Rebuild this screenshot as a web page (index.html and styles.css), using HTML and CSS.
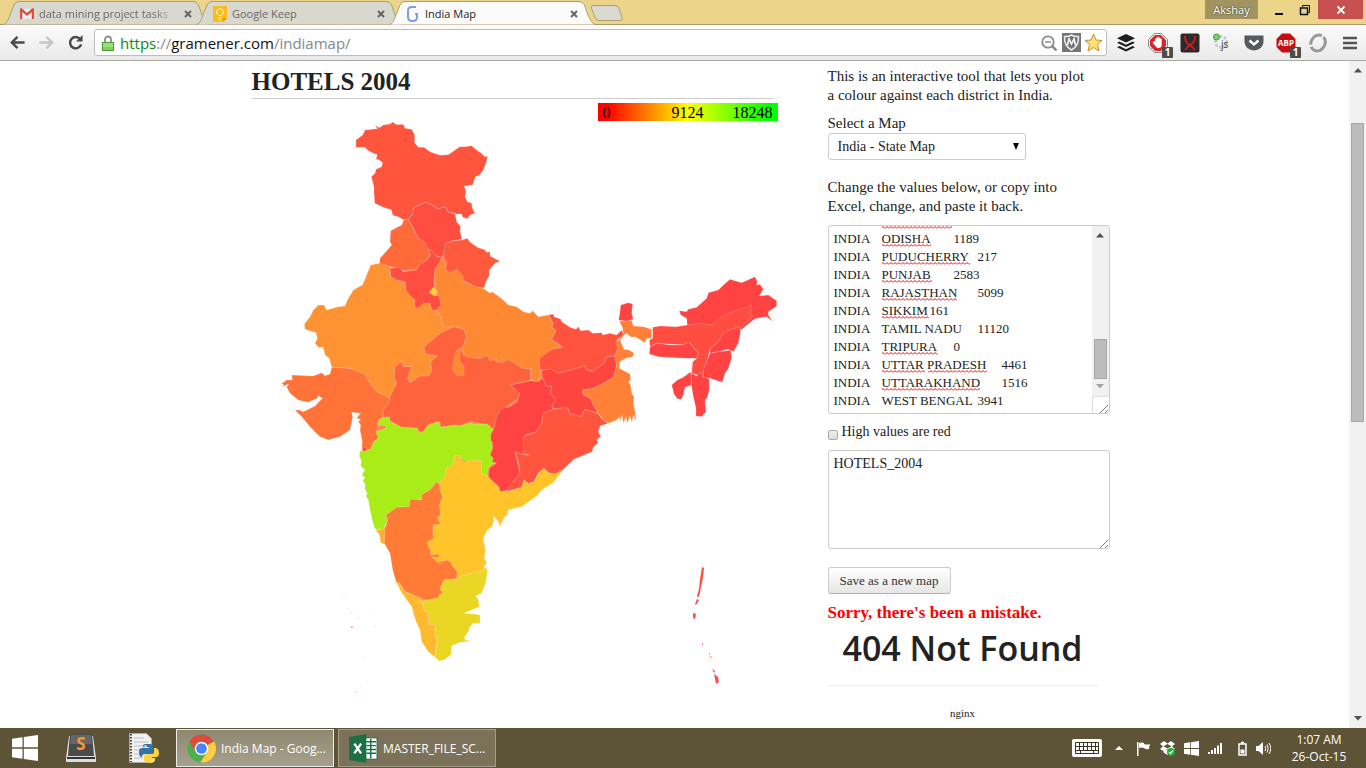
FILE: index.html
```html
<!DOCTYPE html>
<html lang="en">
<head>
<meta charset="utf-8">
<title>India Map</title>
<link rel="stylesheet" href="styles.css">
</head>
<body>
<header class="tabstrip">
  <div class="tabs">
    <div class="tab">
      <svg class="tab-shape" viewBox="0 0 207 25" preserveAspectRatio="none"><path d="M0 24.5C4 24 5 20 7 15L11 5Q12.500 1.500 16 1.500H190Q194 1.500 195.500 5L199 15C201 20 203 24 207 24.500"/></svg>
      <svg class="fav" viewBox="0 0 16 16"><path fill="#eee" d="M2 3h12v10H2z"/><path fill="#d9503f" d="M1 3.500Q1 2 2.500 2L8 7l5.500-5Q15 2 15 3.500V13h-2.200V6L8 10 3.200 6v7H1z"/></svg>
      <span class="tab-title fade">data mining project tasks</span>
      <button class="close" aria-label="Close tab"><svg viewBox="0 0 8 8"><path d="M1 1l6 6M7 1L1 7"/></svg></button>
    </div>
    <div class="tab">
      <svg class="tab-shape" viewBox="0 0 207 25" preserveAspectRatio="none"><path d="M0 24.5C4 24 5 20 7 15L11 5Q12.500 1.500 16 1.500H190Q194 1.500 195.500 5L199 15C201 20 203 24 207 24.500"/></svg>
      <svg class="fav" viewBox="0 0 16 16"><path fill="#fbbc1c" d="M1 0h14v12l-4 4H1z"/><path fill="#e29a00" d="M15 12l-4 4v-4z"/><path fill="none" stroke="#fff" d="M6.500 9.500C3 6 5 2.800 8 2.800s5 3.200 1.500 6.700zM6.500 11.500h3M7 13h2"/></svg>
      <span class="tab-title">Google Keep</span>
      <button class="close" aria-label="Close tab"><svg viewBox="0 0 8 8"><path d="M1 1l6 6M7 1L1 7"/></svg></button>
    </div>
    <div class="tab active">
      <svg class="tab-shape" viewBox="0 0 207 25" preserveAspectRatio="none"><path d="M0 24.5C4 24 5 20 7 15L11 5Q12.500 1.500 16 1.500H190Q194 1.500 195.500 5L199 15C201 20 203 24 207 24.500"/></svg>
      <svg class="fav" viewBox="0 0 16 16"><path fill="none" stroke="#7d9fe0" stroke-width="2" d="M11 1H7Q3 1 3 5v6q0 4 4 4h1q4 0 4-4V8H10"/></svg>
      <span class="tab-title">India Map</span>
      <button class="close" aria-label="Close tab"><svg viewBox="0 0 8 8"><path d="M1 1l6 6M7 1L1 7"/></svg></button>
    </div>
    <button class="newtab" aria-label="New tab"><svg viewBox="0 0 34 16"><path fill="#d9d9d0" stroke="#a99f77" d="M3 .5h22q3 0 4 3l3 9q1 3-2 3H9q-3 0-4-3L1.500 3.500Q.5.5 3 .5z"/></svg></button>
  </div>
  <div class="window-controls">
    <button class="user">Akshay</button>
    <button class="wc" aria-label="Minimise"><svg viewBox="0 0 12 12"><path fill="#111" d="M2 9h8v2H2z"/></svg></button>
    <button class="wc" aria-label="Restore"><svg viewBox="0 0 12 12"><path fill="none" stroke="#111" stroke-width="1" d="M3.500 3V1.500h7v7H9"/><path fill="none" stroke="#111" stroke-width="1.500" d="M1.500 4h7v6.500h-7z"/></svg></button>
    <button class="wc quit" aria-label="Close"><svg viewBox="0 0 12 12"><path stroke="#fff" stroke-width="1.800" d="M2.500 2.500l7 7M9.500 2.500l-7 7"/></svg></button>
  </div>
</header>

<nav class="toolbar">
  <button class="nav" aria-label="Back"><svg viewBox="0 0 18 18"><path fill="none" stroke="#4a4a4a" stroke-width="2.600" d="M16.500 9H3.500M9 3L3 9l6 6"/></svg></button>
  <button class="nav" aria-label="Forward"><svg viewBox="0 0 18 18"><path fill="none" stroke="#c6c6c6" stroke-width="2.600" d="M1.500 9h13M9 3l6 6-6 6"/></svg></button>
  <button class="nav" aria-label="Reload"><svg viewBox="0 0 18 18"><path fill="none" stroke="#4a4a4a" stroke-width="2.600" d="M14 5.500A6 6 0 1 0 15 11"/><path fill="#4a4a4a" d="M16.500 1v7H9.500z"/></svg></button>
  <div class="omnibox">
    <svg class="lock" viewBox="0 0 12 16"><path fill="none" stroke="#8a8f8a" stroke-width="1.800" d="M3 8V4.500a3 3 0 0 1 6 0V8"/><rect x=".5" y="7.500" width="11" height="8" fill="#7fd35c" stroke="#4a9a35"/><path stroke="#b4ec98" d="M1 9h10M1 11h10"/></svg>
    <div class="url"><span class="scheme">https</span>://<span class="host">gramener.com</span>/indiamap/</div>
    <svg class="i16" viewBox="0 0 16 16"><circle cx="7" cy="7" r="5.700" fill="none" stroke="#8b8b8b" stroke-width="1.800"/><path stroke="#8b8b8b" stroke-width="1.500" d="M4 7h6"/><path stroke="#8b8b8b" stroke-width="2.500" d="M11 11l4.500 4.500"/></svg>
    <svg class="i19" viewBox="0 0 19 19"><rect width="19" height="19" fill="#757575"/><path fill="#757575" stroke="#eee" stroke-width="1.500" d="M2.500 3.500Q6 4 9.500 2q3.500 2 7 1.500Q17 13 9.500 17 2 13 2.500 3.500z"/><path fill="none" stroke="#fff" stroke-width="1.500" d="M5.500 12l1.500-6 2.500 5L12 6l1.500 6"/></svg>
    <svg class="i19" viewBox="0 0 19 19"><path fill="#ffe173" stroke="#c2902a" d="M9.500 1l2.500 6 6 .5-4.500 4L15 18l-5.500-3.500L4 18l1.500-6.500L1 7.500 7 7z"/></svg>
  </div>
  <svg class="ext" viewBox="0 0 20 20"><g fill="#1d1d1d"><path d="M10 1l9 4.300-9 4.200L1 5.300z"/><path d="M1 9.800l2.500-1.200L10 11.700l6.500-3.100L19 9.800 10 14z"/><path d="M1 14.200L3.500 13l6.500 3.200 6.500-3.200 2.500 1.200-9 4.300z"/></g></svg>
  <div class="badge-wrap"><svg class="ext" viewBox="0 0 20 20"><path fill="#fff" stroke="#888" d="M6.500 .5h7L19.500 6.500v7L13.500 19.500h-7L.5 13.500v-7z"/><path fill="#d8262b" d="M7 2h6l5 5v6l-5 5H7l-5-5V7z"/><path fill="#fff" d="M6 8h1.200V5.500h1.300V4.500h1.300v-.7h1.300v1h1.300v1h1.300V12q0 3-3.300 3-2 0-3-2L4.600 10z"/></svg><span class="badge">1</span></div>
  <svg class="ext" viewBox="0 0 20 20"><rect x=".5" y=".5" width="19" height="19" rx="2" fill="#2d2a2a"/><path fill="none" stroke="#d41c24" stroke-width="1.800" d="M5 3q0 6 4 8.500t6 5.500M15 3q0 6-4 8.500T5 17"/></svg>
  <svg class="ext" viewBox="0 0 20 20"><circle cx="9" cy="9" r="5.500" fill="none" stroke="#c9c9c9" stroke-width="3" stroke-dasharray="2.500 1.500"/><circle cx="4.500" cy="4" r="3" fill="#7bcf77" stroke="#3a9b3a"/><text x="9" y="15" class="js">js</text></svg>
  <svg class="ext" viewBox="0 0 20 20"><path fill="#58595b" d="M.5 2.500h19V9a9.500 8.500 0 0 1-19 0z"/><path fill="none" stroke="#fff" stroke-width="2.400" d="M5.500 7.500l4.500 4 4.500-4"/></svg>
  <div class="badge-wrap"><svg class="ext" viewBox="0 0 20 20"><path fill="#c60d11" d="M6 .5h8L19.500 6v8L14 19.500H6L.5 14V6z"/><text x="10" y="13" text-anchor="middle" class="abp">ABP</text></svg><span class="badge">1</span></div>
  <svg class="ext" viewBox="0 0 20 20"><ellipse cx="10" cy="10" rx="7" ry="8.200" fill="none" stroke="#999" stroke-width="3" stroke-dasharray="17 2" transform="rotate(25 10 10)"/></svg>
  <button class="menu" aria-label="Menu"><svg viewBox="0 0 14 14"><path stroke="#555" stroke-width="2.600" d="M0 2h14M0 7h14M0 12h14"/></svg></button>
</nav>

<div class="viewport">
  <main class="page">
    <section class="chart">
      <h1 class="title">HOTELS 2004</h1>
      <div class="legend"><span>0</span><span>9124</span><span class="max">18248</span></div>
      <svg class="map" viewBox="756 363 1590 1800" role="img" aria-label="Hotels by state">
        <path fill="#ff8650" d="M1240 700L1330 680 1370 740 1360 790 1420 850 1500 930 1640 1000 1700 1000 1850 1020 1845 1130 1800 1240 1640 1390 1590 1420 1500 1480 1440 1560 1420 1700 1350 1780 1290 1950 1240 1780 1170 1600 1110 1380 1130 1300 1060 1120 1120 900 1200 860z"/>
        <g transform="translate(720 180)">
          <path fill="#ff553e" d="M348 240L348 262 375 262 385 272 400 280 412 284 408 297 418 300 428 308 425 320 408 328 405 340 394 350 402 380 402 400 404 430 430 442 455 450 458 466 475 470 492 480 505 478 518 462 522 442 540 435 555 427 575 434 595 447 615 440 625 456 650 462 665 462 668 472 682 476 690 465 705 460 697 445 695 430 682 425 675 410 678 395 673 378 698 375 706 350 718 346 730 330 738 310 743 288 735 290 722 278 710 270 695 257 675 260 660 260 645 270 625 284 600 286 570 275 552 262 535 262 524 248 524 225 515 208 495 205 490 193 470 194 458 186 450 192 430 195 418 203 405 196 412 206 375 210 368 225z"/>
          <path fill="#ff4d42" d="M505 478L518 462 522 442 540 435 555 427 575 434 595 447 615 440 625 456 645 462 650 485 662 500 660 515 666 538 640 542 618 550 612 580 606 592 590 588 575 575 560 565 550 545 535 535 520 505z"/>
          <path fill="#ff6a39" d="M492 478L505 478 520 505 535 535 553 545 565 570 572 582 560 600 540 612 530 628 490 632 470 625 450 620 418 615 420 595 455 555 450 545 452 512 485 495z"/>
        </g>
        <g transform="translate(780 750)">
          <path fill="#ff9333" d="M332 45L358 40 392 50 392 80 430 95 440 120 455 138 465 155 468 172 490 158 510 158 515 180 530 178 535 195 548 205 548 225 580 230 540 250 492 290 495 312 532 318 530 328 512 335 515 360 508 378 480 378 450 398 443 385 455 350 430 350 425 335 405 350 402 380 410 400 408 415 395 430 388 443 350 425 330 400 315 372 270 355 215 352 208 325 195 315 190 292 175 292 165 280 172 265 168 248 135 238 133 222 150 200 160 180 175 165 192 165 200 180 235 170 255 168 262 150 280 120 308 104 320 75z"/>
          <path fill="#ff633d" d="M580 230L612 238 620 260 605 300 610 315 660 325 680 315 710 335 745 328 790 355 812 355 812 390 750 405 780 425 775 445 740 470 715 495 700 540 685 525 630 515 600 528 540 530 530 515 505 525 495 540 485 548 470 535 420 532 390 510 370 500 368 480 385 460 388 443 395 430 410 400 402 380 405 350 425 335 430 350 455 350 443 385 450 398 480 378 508 378 515 360 512 335 532 318 495 312 492 290 540 250z"/>
          <path fill="#ff8833" d="M545 25L556 40 560 62 590 60 612 80 610 95 640 108 670 115 690 130 697 125 730 150 745 165 770 170 790 185 810 190 818 182 835 200 865 195 880 220 875 230 888 242 875 265 905 292 875 298 840 325 842 360 835 395 812 390 812 355 790 355 745 328 725 338 710 335 710 325 690 332 680 315 660 325 625 322 610 315 612 303 600 300 598 330 612 350 612 375 595 378 580 365 578 350 585 320 588 302 610 290 620 260 612 238 590 230 560 232 548 225 545 205 530 178 540 165 532 140 525 100 522 70 530 45z"/>
          <path fill="#ff7338" d="M215 352L270 355 315 372 330 400 350 425 388 443 385 460 368 480 370 500 355 510 355 520 350 545 358 565 345 575 335 600 305 600 307 575 300 540 302 525 295 515 302 508 290 505 302 490 275 487 278 500 275 515 270 540 240 560 205 570 180 560 150 530 125 500 105 480 118 480 130 485 165 468 187 445 175 437 172 445 145 457 115 450 90 430 80 412 86 402 66 410 72 402 62 403 80 390 97 390 95 375 160 378 185 368 195 377 210 372z"/>
        </g>
        <g transform="translate(720 180)">
          <path fill="#ff4d42" d="M450 625L478 622 490 635 530 630 540 612 562 600 572 585 565 568 575 572 590 590 606 592 600 605 585 628 582 660 582 680 570 692 580 706 598 708 602 735 590 750 575 750 570 730 550 730 535 745 524 742 525 720 508 705 498 690 497 665 470 660 452 650z"/>
          <path fill="#f5d327" d="M580 682L592 695 585 708 568 698z"/>
          <path fill="#ff5a3d" d="M612 595L614 552 640 542 666 540 682 535 690 546 712 562 735 570 740 577 750 575 750 588 780 604 765 610 748 630 748 648 740 660 732 684 705 680 685 668 668 660 670 650 650 628 630 638 617 630 620 605z"/>
        </g>
        <g transform="translate(1020 1230)">
          <path fill="#aaec17" d="M60 122L92 118 100 95 115 85 108 65 137 55 137 47 115 46 115 35 126 24 148 20 150 36 165 42 185 52 232 55 235 68 250 65 265 45 298 35 302 43 295 45 305 52 345 45 360 47 395 38 400 43 440 42 462 60 450 70 460 82 460 95 453 100 460 120 456 142 472 158 458 162 445 175 440 198 425 192 424 152 380 155 345 135 340 165 318 175 318 195 300 220 290 215 272 238 245 255 245 270 210 268 208 290 170 292 138 315 143 330 130 360 105 357 98 335 90 300 85 270 78 258 82 250 74 235 76 225 68 210 75 205 66 193 75 180 62 168 64 150 58 140z"/>
          <path fill="#ff4342" d="M68 114L76 113 82 121 73 124 68 122z"/>
          <path fill="#ffb02e" d="M105 355L115 360 130 356 138 345 136 370 135 404 122 398 118 375z"/>
          <path fill="#ffc42a" d="M345 135L360 138 365 152 380 158 390 150 424 152 425 192 445 196 465 212 480 242 510 243 545 230 555 208 570 220 585 210 600 185 612 175 625 190 645 192 672 175 640 218 605 240 590 258 545 290 530 293 505 300 500 318 492 322 480 350 475 335 460 318 462 335 455 350 440 362 430 385 436 420 433 445 440 460 430 470 443 478 400 490 358 502 345 518 335 508 352 485 320 450 290 455 275 455 265 425 262 395 278 390 280 345 302 342 290 320 300 315 298 285 308 262 298 235 300 218 318 195 318 175 340 165z"/>
          <path fill="none" stroke="#ffc42a" stroke-width="2" stroke-dasharray="3 5" d="M500 305l20-12 22 2M500 318l45-18M505 312l35-8M455 340l25-4M462 350l22-5M455 330l20 0M475 356l8-10"/>
          <path fill="#ff7b36" d="M290 215L300 225 298 235 308 262 298 285 302 315 290 322 302 342 280 345 278 370 282 385 262 395 265 410 272 420 272 435 298 432 297 443 275 440 290 455 300 462 320 450 335 458 337 468 352 485 350 505 335 508 312 510 300 538 312 545 310 555 300 552 295 565 262 572 235 562 195 545 168 515 158 480 150 430 133 400 135 355 143 330 138 315 170 292 208 290 210 268 245 270 245 255 272 238z"/>
          <path fill="#ecd625" d="M443 476L437 520 425 550 407 558 415 568 418 590 395 600 372 610 405 612 420 615 420 640 400 640 390 650 385 665 374 680 375 690 395 694 360 697 335 708 333 735 315 748 298 754 285 742 292 690 285 675 285 645 265 642 265 610 250 600 250 585 235 573 262 570 295 563 300 552 310 550 300 538 312 510 335 508 345 518 358 500 400 488 430 480z"/>
          <path fill="#fff" d="M390 606l24-14 3 4-14 6 15 4-12 5z"/>
          <path fill="#ffb92e" d="M168 515L180 520 195 545 235 562 245 570 235 575 250 585 250 600 265 610 265 642 285 645 285 675 292 690 285 742 265 725 245 695 240 660 228 635 215 590 185 548z"/>
          <g fill="#f77"><path d="M33 649h5v5h-5zM48 846h3v3h-3z"/><path opacity=".4" d="M10 558h4v3h-4zM22 594h3v3h-3zM32 605h4v3h-4zM52 624h4v3h-4zM102 648h4v3h-4zM71 741h4v3h-4zM81 810h1v12h-1zM67 828h1v10h-1zM58 595h3v2h-3zM105 612h3v2h-3z"/></g>
        </g>
        <g transform="translate(1410 870)">
          <path fill="#ff533f" d="M235 75L250 72 252 80 272 87 275 95 300 112 318 118 325 110 332 122 355 120 368 130 395 128 398 135 420 130 440 135 455 120 462 135 440 150 445 175 435 198 410 200 402 220 368 245 350 240 345 228 310 238 265 250 245 238 210 240 208 205 245 178 280 172 245 148 258 122 245 110 250 100z"/>
          <path fill="#ff4540" d="M215 240L245 238 265 250 310 238 345 228 350 240 368 245 402 220 410 200 435 198 440 225 432 262 400 280 370 295 338 300 340 315 362 325 370 345 385 370 345 358 335 380 300 372 295 355 250 355 245 345 258 330 240 310 245 290 228 288 218 265z"/>
          <path fill="#ff4342" d="M122 285L182 272 205 275 218 265 228 288 245 290 240 310 258 330 245 345 250 358 220 370 215 400 200 425 165 435 160 485 178 495 135 488 150 550 130 575 118 600 90 605 88 590 75 580 55 560 58 535 80 520 66 515 70 505 60 495 68 475 68 460 62 450 62 435 72 415 80 380 95 355 120 350 142 335 150 310 135 298z"/>
          <path fill="#ff553e" d="M250 358L290 352 300 372 335 380 345 358 385 372 395 385 415 400 390 408 385 425 392 440 380 450 385 458 370 472 366 485 355 490 312 508 278 540 255 552 235 548 222 535 205 550 192 575 175 580 162 570 155 592 110 605 118 590 150 550 145 510 135 485 155 492 178 497 160 485 160 440 200 425 215 400 220 370z"/>
          <path fill="#ff8036" d="M448 92L470 94 485 90 490 108 520 110 545 118 545 145 530 145 525 158 495 140 485 142 468 130 450 150 462 178 478 180 492 190 488 200 468 205 450 215 448 235 480 252 482 270 475 275 482 285 485 310 492 320 490 340 495 365 498 395 490 375 486 398 480 378 472 400 468 380 460 400 456 374 450 395 448 380 440 390 415 400 395 385 385 370 370 345 362 325 338 308 338 300 370 295 400 280 432 262 440 225 433 198 445 175 435 160 460 135 458 115z"/>
          <path fill="#ff4342" d="M446 90L450 65 452 45 475 38 488 42 485 70 490 88 470 94z"/>
          <path fill="#ff4342" d="M628 62L650 65 655 58 680 52 710 25 715 8 745 0 760 -15 780 -32 815 -22 855 -40 862 -25 860 -15 870 -17 880 -2 868 18 895 15 920 32 920 48 895 65 895 75 908 95 890 80 855 86 815 118 652 108 650 85 632 75z"/>
          <path fill="#ff4d42" d="M548 112L570 108 620 110 652 105 690 100 725 105 760 76 845 45 840 70 848 78 835 95 805 112 770 125 740 160 718 180 715 200 705 230 698 260 665 250 668 215 680 205 685 190 660 158 640 165 560 160 540 170 538 150 548 145z"/>
          <path fill="#ff4342" d="M540 170L560 160 605 165 640 165 655 155 665 165 685 190 680 205 645 205 565 200 538 192z"/>
          <path fill="#ff4342" d="M808 110L812 125 805 160 790 185 775 178 745 185 720 190 718 180 740 160 765 125z"/>
          <path fill="#ff4342" d="M720 190L745 185 782 181 785 205 775 235 765 250 757 277 720 265 700 265 700 240 712 210z"/>
          <path fill="#ff4342" d="M662 248L680 258 690 246 700 262 718 266 718 300 712 322 705 330 708 365 695 380 678 378 678 355 670 320 665 290z"/>
          <path fill="#ff4342" d="M605 285L622 270 640 262 662 245 665 285 645 292 640 315 634 328 622 326 612 312z"/>
        </g>
        <g transform="scale(3)" fill="#ff4f4a" class="isles"><path d="M702 567l2 1-1 10-2 9-1 6-2 5-1-2 2-7 1-10zM697 599l2 1-3 5-1-1zM693 613l3 1-1 5-2-1zM702 643l1 1-1 2zM709 653l1 1-1 1zM710 656l2 1-1 1zM712 669l3 2-1 2zM714 674l4 3 1 5-3 2-1-5z"/></g>
      </svg>
    </section>

    <section class="panel">
      <p class="text">This is an interactive tool that lets you plot a colour against each district in India.</p>
      <label class="label" for="mapsel">Select a Map</label>
      <div class="select-wrap"><select id="mapsel" class="select"><option>India - State Map</option></select><svg class="arrow" viewBox="0 0 6 7"><path d="M0 0h6L3 7z"/></svg></div>
      <p class="text gap">Change the values below, or copy into Excel, change, and paste it back.</p>
      <div class="databox">
        <textarea class="data" aria-label="Values" wrap="off" spellcheck="false">
INDIA	ODISHA	1189
INDIA	PUDUCHERRY	217
INDIA	PUNJAB	2583
INDIA	RAJASTHAN	5099
INDIA	SIKKIM	161
INDIA	TAMIL NADU	11120
INDIA	TRIPURA	0
INDIA	UTTAR PRADESH	4461
INDIA	UTTARAKHAND	1516
INDIA	WEST BENGAL	3941</textarea>
        <svg class="squiggles" viewBox="0 0 264 187">
          <defs><pattern id="sq" width="4" height="3" patternUnits="userSpaceOnUse"><path d="M0 2.500L2 .5 4 2.500" fill="none" stroke="#f00" stroke-width="1"/></pattern></defs>
          <g fill="url(#sq)"><rect x="53" y="0" width="70" height="3"/><rect x="53" y="18" width="49" height="3"/><rect x="53" y="36" width="88" height="3"/><rect x="53" y="54" width="50" height="3"/><rect x="53" y="72" width="75" height="3"/><rect x="53" y="90" width="47" height="3"/><rect x="53" y="126" width="56" height="3"/><rect x="53" y="144" width="43" height="3"/><rect x="99" y="144" width="59" height="3"/><rect x="53" y="162" width="98" height="3"/></g>
        </svg>
        <div class="mini-scroll">
          <svg class="sarrow" viewBox="0 0 8 5"><path fill="#505050" d="M4 0l4 4.500H0z"/></svg>
          <div class="mini-thumb"></div>
          <svg class="sarrow" viewBox="0 0 8 5"><path fill="#a3a3a3" d="M0 0h8L4 4.500z"/></svg>
          <div class="corner"><svg viewBox="0 0 9 9"><path d="M0 9l8-8M5 9l3-3"/></svg></div>
        </div>
      </div>
      <label class="check"><input type="checkbox"><span>High values are red</span></label>
      <div class="notebox"><textarea class="note" aria-label="Map name" spellcheck="false">HOTELS_2004</textarea><svg class="grip" viewBox="0 0 9 9"><path d="M0 9l8-8M5 9l3-3"/></svg></div>
      <button class="save">Save as a new map</button>
      <p class="error">Sorry, there's been a mistake.</p>
      <h2 class="notfound">404 Not Found</h2>
      <p class="server">nginx</p>
    </section>
  </main>
  <div class="scrollbar">
    <svg class="sarrow" viewBox="0 0 8 5"><path fill="#505050" d="M4 0l4 4.500H0z"/></svg>
    <div class="track"><div class="thumb"></div></div>
    <svg class="sarrow" viewBox="0 0 8 5"><path fill="#505050" d="M0 0h8L4 4.500z"/></svg>
  </div>
</div>

<footer class="taskbar">
  <button class="start" aria-label="Start"><svg viewBox="0 0 26 26"><path fill="#fff" d="M0 3.800l10.500-1.500v10H0zM11.800 2.100L26 0v12.300H11.800zM0 13.700h10.500v10L0 22.200zM11.800 13.700H26V26l-14.200-2.100z"/></svg></button>
  <button class="pin" aria-label="Sublime Text"><svg viewBox="0 0 32 30"><path fill="#ddd" d="M1 25L4 3h24l3 22v4H1z"/><path fill="#333" d="M2 24h28v2H2z"/><path fill="#4b4b4b" d="M5 1h22l2 22H3z"/><path fill="#666" d="M6 2h20l1 9H5z"/><text x="16" y="17" text-anchor="middle" class="subl">S</text></svg></button>
  <button class="pin py" aria-label="Python file"><svg viewBox="0 0 30 30"><path fill="#f1f1f1" stroke="#aaa" d="M.5.500h17l5 5v24H.5z"/><path stroke="#444" stroke-width="2" stroke-dasharray="1.500 1.500" d="M2 1v28"/><path stroke="#bbb" d="M5 5h10M5 9h14M5 13h9M5 17h6M5 21h6M5 25h9"/><path fill="#3673a5" d="M16 11h5q3 0 3 3v4q0 3-3 3h-5q-3 0-3 3H12q-2-1-2-5t3-4h7v-1h-6v-1q0-2 2-2z"/><path fill="#ffd242" d="M25 15h2q3 1 3 5t-3 4h-6v1h5v2q0 3-5 3t-6-3v-3q0-3 3-3h5q2 0 2-3z"/><circle cx="16.500" cy="13" r="1" fill="#fff"/><circle cx="23" cy="27.500" r="1" fill="#fff"/></svg></button>
  <button class="task current"><svg class="ticon" viewBox="0 0 30 30"><circle cx="15" cy="15" r="14.500" fill="#4caf50"/><path fill="#dd4b3e" d="M15 15L2.400 7.800A14.500 14.500 0 0 1 27.600 7.800z"/><path fill="#ffcd41" d="M15 15l13-7.200A14.500 14.500 0 0 1 15 29.500l-1-.5 7-11z"/><path fill="#dd4b3e" d="M2.400 7.800L8.500 18 15 8.500h13z"/><circle cx="15" cy="15" r="7" fill="#fff"/><circle cx="15" cy="15" r="5.500" fill="#4487f3"/></svg><span>India Map - Goog...</span></button>
  <button class="task"><svg class="ticon" viewBox="0 0 30 30"><path fill="#fff" stroke="#1d6f43" d="M17 4h12v22H17z"/><path stroke="#1d6f43" stroke-width="1.500" d="M18 8h10M18 12h10M18 16h10M18 20h10M22.500 5v20"/><path fill="#1d7044" d="M0 3l18-3v30L0 27z"/><path stroke="#fff" stroke-width="2.400" d="M5.500 10l7 10M12.500 10l-7 10"/></svg><span>MASTER_FILE_SC...</span></button>
  <div class="tray">
    <svg class="kbd" viewBox="0 0 30 18"><rect x=".5" y=".5" width="29" height="17" rx="1" fill="#fff" stroke="#fff"/><path fill="none" stroke="#3a3420" d="M3.500 3.500h23v11h-23zM3.500 7.500h23M3.500 11.500h23M7.500 3.500v8M11.500 3.500v8M15.500 3.500v8M19.500 3.500v8M23.500 3.500v8M8.500 11.500v3M21.500 11.500v3"/></svg>
    <svg class="up" viewBox="0 0 8 4"><path fill="#fff" d="M4 0l4 4H0z"/></svg>
    <svg class="t15" viewBox="0 0 15 15"><path fill="#fff" d="M1 1h1.500v14H1zM3 2q3-1 5 0v1q3 1 6 0-1 3-1 5-3 1-5-1-3-1-5 0z"/></svg>
    <svg class="t15" viewBox="0 0 15 15"><path fill="#fff" d="M4 0l3.500 2.500L11 0l4 3-3 2.300L15 8l-4 2.500L7.500 8 4 10.500 0 8l3-2.700L0 3zM3 11l4.500-2.500L11 11l-3.500 3z"/><path fill="#5d5336" d="M3.500 5.300L7.500 3l4 2.300-4 2.300z"/><circle cx="11" cy="11" r="4" fill="#1faa3c"/><path fill="none" stroke="#fff" stroke-width="1.300" d="M9 11l1.500 1.500L13 9.500"/></svg>
    <svg class="t15" viewBox="0 0 26 26"><path fill="#fff" d="M0 3.800l10.500-1.500v10H0zM11.800 2.100L26 0v12.300H11.800zM0 13.700h10.500v10L0 22.200zM11.800 13.700H26V26l-14.200-2.100z"/></svg>
    <svg class="t15" viewBox="0 0 15 15"><path fill="#fff" d="M0 11h2v2H0zM3 9h2v4H3zM6 7h2v6H6zM9 4.500h2V13H9zM12 2h2v11h-2z"/></svg>
    <svg class="t15" viewBox="0 0 15 15"><path fill="none" stroke="#fff" stroke-width="1.500" d="M7 3h7v11H7zM9 1.500h3"/><path fill="#fff" d="M8.500 8.500h4v4h-4z"/></svg>
    <svg class="t15" viewBox="0 0 15 15"><path fill="#fff" d="M0 5h2.500L7 1v13L2.500 10H0z"/><path fill="none" stroke="#fff" d="M9 5q1.500 2.500 0 5M11 3.500q2.500 4 0 8M13 2q3.500 5.500 0 11"/></svg>
    <div class="clock"><div>1:07 AM</div><div>26-Oct-15</div></div>
  </div>
</footer>
</body>
</html>
```
FILE: styles.css
```css
* { box-sizing: border-box; }
html, body { height: 100%; }
body {
  margin: 0;
  display: flex;
  flex-direction: column;
  overflow: hidden;
  background: #fff;
  color: #222;
  font-family: "Liberation Serif", serif;
}
button { font: inherit; border: 0; padding: 0; background: none; }
svg { display: block; flex: none; }
h1, h2, p { margin: 0; }

/* Browser frame */
.tabstrip {
  flex: none;
  height: 25px;
  display: flex;
  justify-content: space-between;
  background: #ecd58b;
  box-shadow: inset 0 -1px #a99b69;
  font-family: "Open Sans", sans-serif;
  font-size: 11px;
}
.tabs { display: flex; padding-left: 3px; }
.tab {
  position: relative;
  width: 207px;
  height: 25px;
  margin-right: -14px;
  padding: 2px 14px 0 16px;
  display: flex;
  align-items: center;
  gap: 4px;
  color: #6a6862;
}
.tab.active { z-index: 1; color: #222; }
.tab-shape { position: absolute; inset: 0; width: 100%; height: 100%; fill: #d8d8cf; stroke: #a99f77; }
.active .tab-shape { fill: #fbfbfb; }
.fav { position: relative; width: 16px; height: 16px; }
.tab-title { position: relative; flex: 1; overflow: hidden; white-space: nowrap; }
.fade { mask-image: linear-gradient(to right, #000 80%, transparent); }
.close { position: relative; width: 8px; margin-right: 4px; }
.close svg { width: 8px; height: 8px; fill: none; stroke: #666; stroke-width: 2; }
.newtab { margin: 5px 0 0 8px; align-self: flex-start; }
.newtab svg { width: 34px; height: 16px; }
.window-controls { display: flex; height: 19px; padding-right: 3px; }
.user { width: 53px; margin-right: 8px; background: #a29461; color: #fff; text-shadow: 0 0 2px #222; }
.wc { width: 26px; display: flex; justify-content: center; align-items: center; }
.wc svg { width: 12px; height: 12px; }
.quit { width: 45px; background: #c75050; }

.toolbar {
  flex: none;
  height: 36px;
  display: flex;
  align-items: center;
  gap: 12px;
  padding: 0 9px;
  background: linear-gradient(#fbfbfb, #eaeaea);
  border-bottom: 1px solid #a9a9a9;
}
.nav svg { width: 17px; height: 17px; }
.omnibox {
  flex: 1;
  height: 27px;
  display: flex;
  align-items: center;
  gap: 3px;
  margin-left: -2px;
  margin-right: -3px;
  padding: 0 3px 0 7px;
  border: 1px solid #bdbdbd;
  border-radius: 3px;
  background: #fff;
}
.lock { width: 12px; height: 16px; }
.url { flex: 1; margin-left: 3px; color: #888; font: 15px/22px "Open Sans", sans-serif; }
.scheme { color: #0b8a0b; }
.host { color: #111; }
.i16 { width: 16px; height: 16px; margin-right: 2px; }
.i19 { width: 19px; height: 19px; }
.ext { width: 20px; height: 20px; }
.badge-wrap { position: relative; }
.badge {
  position: absolute;
  right: -5px;
  bottom: -5px;
  width: 11px;
  height: 11px;
  border-radius: 1px;
  background: #4c4c4c;
  color: #fff;
  text-align: center;
  font: bold 10px/11px "Open Sans", sans-serif;
}
.js { font: 10px "Open Sans", sans-serif; fill: #333; }
.abp { font: bold 8px "Open Sans", sans-serif; fill: #fff; }
.menu { margin: 0 0 0 3px; }
.menu svg { width: 14px; height: 14px; }

/* Page */
.viewport { flex: 1; min-height: 0; display: flex; }
.page {
  flex: 1;
  min-width: 0;
  overflow: hidden;
  display: flex;
  justify-content: center;
  gap: 54px;
}
.chart { width: 522px; min-width: 0; }
.panel { width: 270px; min-width: 0; padding-top: 6px; }
.title {
  padding-top: 5px;
  font-size: 25px;
  line-height: 32px;
  border-bottom: 1px solid #ccc;
}
.legend {
  width: 180px;
  height: 18px;
  margin: 4px -4px 0 auto;
  padding: 0 5px;
  display: grid;
  grid-template-columns: 1fr auto 1fr;
  background: linear-gradient(to right, #f00 5%, #ff0 50%, #0f0 95%);
  color: #000;
  font-size: 16px;
  line-height: 19px;
}
.max { text-align: right; }
.map { width: 530px; height: 600px; }
.map path { stroke: rgba(255, 255, 255, .3); stroke-width: 2; }
.map .isles path { stroke: none; }
.text { padding-right: 8px; font-size: 15px; line-height: 19px; }
.label { display: block; margin-top: 9px; font-size: 15px; line-height: 19px; }
.gap { margin-top: 18px; }
.select-wrap { position: relative; width: 198px; }
.select {
  appearance: none;
  display: block;
  width: 100%;
  height: 27px;
  padding: 0 9px;
  border: 1px solid #ccc;
  border-radius: 3px;
  background: #fff;
  color: #222;
  font: 14px "Liberation Serif", serif;
}
.arrow { position: absolute; right: 7px; top: 10px; width: 6px; height: 7px; }
.databox, .notebox {
  position: relative;
  width: 282px;
  display: flex;
  border: 1px solid #ccc;
  border-radius: 3px;
  overflow: hidden;
}
.databox { height: 189px; margin-top: 9px; }
.data, .note {
  flex: 1;
  min-width: 0;
  border: 0;
  outline: 0;
  resize: none;
  overflow: hidden;
  background: none;
  color: #222;
  font: 13px/18px "Liberation Serif", serif;
  tab-size: 24px;
}
.data { padding: 4px 5px 0; }
.note { padding: 4px 5px; font-size: 14px; }
.squiggles { position: absolute; left: 0; top: 0; width: 264px; height: 187px; pointer-events: none; }
.mini-scroll {
  width: 17px;
  display: flex;
  flex-direction: column;
  align-items: center;
  background: #f1f1f1;
}
.sarrow { width: 8px; height: 5px; margin: 7px 0; }
.mini-thumb { width: 13px; height: 40px; margin: auto 0 -2px; background: #bcbcbc; border: 1px solid #a8a8a8; }
.corner { width: 17px; height: 17px; padding: 7px 0 0 7px; background: #fff; border: solid #ddd; border-width: 1px 0 0 1px; }
.corner svg, .grip { width: 9px; height: 9px; fill: none; stroke: #777; }
.grip { position: absolute; right: 0; bottom: 0; }
.check { display: flex; align-items: center; gap: 4px; margin-top: 8px; font-size: 14px; line-height: 19px; }
.check input {
  appearance: none;
  width: 10px;
  height: 10px;
  margin: 6px 0 0;
  border: 1px solid #aaa;
  border-radius: 2px;
  background: linear-gradient(#eee, #ddd);
}
.notebox { height: 99px; margin-top: 9px; }
.save {
  display: block;
  margin-top: 18px;
  height: 27px;
  width: 123px;
  border: 1px solid #ccc;
  border-bottom-color: #b3b3b3;
  border-radius: 3px;
  background: linear-gradient(#fff, #e6e6e6);
  color: #333;
  font-size: 13px;
}
.error { margin-top: 9px; color: #f00; font-size: 17px; font-weight: bold; line-height: 19px; white-space: nowrap; }
.notfound {
  padding: 5px 0 16px;
  border-bottom: 1px solid #eee;
  text-align: center;
  font: 600 34px/42px "Open Sans", sans-serif;
}
.server { margin-top: 18px; text-align: center; font-size: 11px; line-height: 18px; }

.scrollbar {
  flex: none;
  width: 17px;
  display: flex;
  flex-direction: column;
  align-items: center;
  background: #f1f1f1;
}
.track { flex: 1; padding-top: 43px; }
.thumb { width: 13px; height: 51%; background: #bcbcbc; border: 1px solid #a8a8a8; }

/* Taskbar */
.taskbar {
  flex: none;
  height: 40px;
  display: flex;
  align-items: center;
  background: #5d5336;
  color: #fff;
  font-family: "Open Sans", sans-serif;
  font-size: 12px;
}
.start { margin-left: 12px; }
.start svg { width: 26px; height: 26px; }
.pin { margin-left: 27px; }
.pin svg { width: 32px; height: 30px; }
.py { margin-left: 32px; margin-right: 17px; }
.py svg { width: 30px; }
.subl { font: bold 17px "Open Sans", sans-serif; fill: #f79a32; }
.task {
  width: 158px;
  height: 38px;
  margin-right: 4px;
  padding-left: 10px;
  display: flex;
  align-items: center;
  gap: 5px;
  background: #7b7259;
  border: 1px solid #a39d8a;
  color: #fff;
  font-size: 12px;
  white-space: nowrap;
}
.current { background: linear-gradient(#8f8870, #a6a18e); border-color: #eee; }
.ticon { width: 29px; height: 29px; }
.tray { margin-left: auto; padding-right: 18px; display: flex; align-items: center; gap: 9px; }
.kbd { width: 30px; height: 18px; margin-right: 4px; }
.up { width: 8px; height: 4px; margin-right: 4px; }
.t15 { width: 15px; height: 15px; }
.clock { width: 58px; margin-left: 10px; text-align: center; line-height: 17px; white-space: nowrap; }
```
